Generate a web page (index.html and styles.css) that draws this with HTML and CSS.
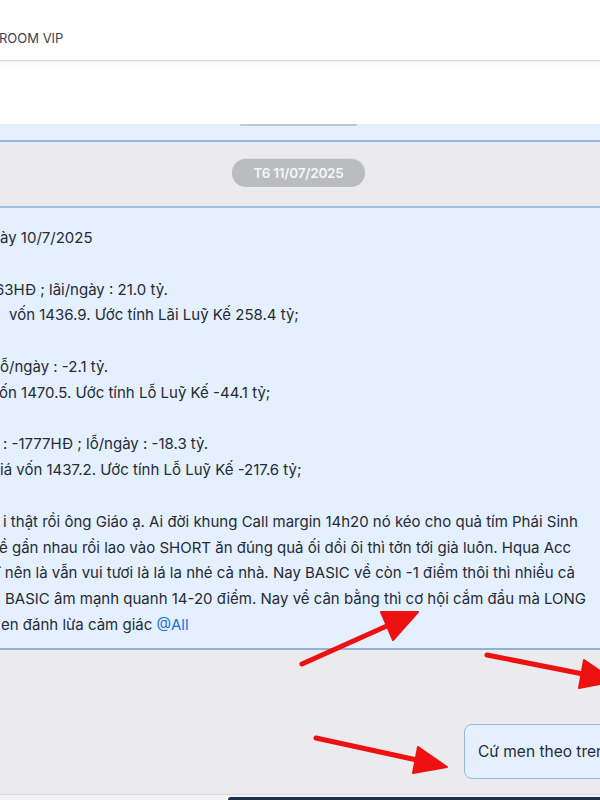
FILE: index.html
```html
<!DOCTYPE html>
<html lang="vi">
<head>
<meta charset="UTF-8">
<meta name="viewport" content="width=device-width, initial-scale=1.0">
<title>ROOM VIP</title>
<link rel="stylesheet" href="styles.css">
</head>
<body>
<div class="screen">
  <div class="header">
    <div class="title">ROOM VIP</div>
  </div>
  <div class="pinned"></div>

  <div class="chat">
    <div class="bubble prev"><span class="prev-shadow"></span></div>

    <div class="date-row">
      <span class="date-pill">T6 11/07/2025</span>
    </div>

    <div class="bubble main">
      <p class="ln">ày 10/7/2025</p>
      <p class="ln blank">&nbsp;</p>
      <p class="ln ind-n5">63HĐ ; lãi/ngày : 21.0 tỷ.</p>
      <p class="ln ind-9">vốn 1436.9. Ước tính Lãi Luỹ Kế 258.4 tỷ;</p>
      <p class="ln blank">&nbsp;</p>
      <p class="ln">ỗ/ngày : -2.1 tỷ.</p>
      <p class="ln ind-n1">ốn 1470.5. Ước tính Lỗ Luỹ Kế -44.1 tỷ;</p>
      <p class="ln blank">&nbsp;</p>
      <p class="ln ind-3">: -1777HĐ ; lỗ/ngày : -18.3 tỷ.</p>
      <p class="ln">iá vốn 1437.2. Ước tính Lỗ Luỹ Kế -217.6 tỷ;</p>
      <p class="ln blank">&nbsp;</p>
      <p class="ln ind-3">i thật rồi ông Giáo ạ. Ai đời khung Call margin 14h20 nó kéo cho quả tím Phái Sinh</p>
      <p class="ln ind-n1">ề gần nhau rồi lao vào SHORT ăn đúng quả ối dồi ôi thì tởn tới già luôn. Hqua Acc</p>
      <p class="ln ind-n3">ĩ nên là vẫn vui tươi là lá la nhé cả nhà. Nay BASIC về còn -1 điểm thôi thì nhiều cả</p>
      <p class="ln ind-5">BASIC âm mạnh quanh 14-20 điểm. Nay về cân bằng thì cơ hội cắm đầu mà LONG</p>
      <p class="ln ind-1">en đánh lừa cảm giác <span class="mention">@All</span></p>
    </div>

    <div class="mine-row">
      <div class="bubble mine">Cứ men theo trend mà đánh</div>
    </div>
  </div>

  <div class="footer">
    <div class="composer"></div>
  </div>

  <!-- red arrows drawn over the screenshot -->
  <svg class="arrows" width="600" height="800" viewBox="0 0 600 800">
    <g stroke="#ee1111" stroke-width="5" stroke-linecap="round" fill="#ee1111">
      <line x1="302" y1="664" x2="389" y2="625"/>
      <polygon points="418,612 393,640 381,612" stroke-width="2" stroke-linejoin="round"/>
      <line x1="487" y1="655" x2="583" y2="674"/>
      <polygon points="615,681 579,688 584,660" stroke-width="2" stroke-linejoin="round"/>
      <line x1="316" y1="738" x2="417" y2="760"/>
      <polygon points="447,767 413,773 418,747" stroke-width="2" stroke-linejoin="round"/>
    </g>
  </svg>
</div>
</body>
</html>
```

FILE: styles.css
```css
html, body { margin: 0; padding: 0; }
body { font-family: Inter, "Noto Sans", sans-serif; background: #ebebed; color: #262b35; }
.screen { position: relative; width: 600px; height: 800px; overflow: hidden; display: flex; flex-direction: column; }

.header { height: 60px; background: #fff; border-bottom: 1px solid #d3d4d7; box-shadow: 0 2px 4px rgba(0,0,0,0.06); display: flex; align-items: center; position: relative; z-index: 1; }
.title { font-size: 13px; color: #3e4350; margin-left: -1px; padding-top: 15px; }
.pinned { height: 63px; background: #fff; }

.chat { flex: 1; background: #ebebed; display: flex; flex-direction: column; }
.bubble { background: #e4f0fd; border: 1px solid #9fbde4; }
.bubble.prev { height: 16px; border-top: none; border-left: none; border-right: none; border-bottom: 2px solid #97b5e6; margin-right: -2px; position: relative; }
.prev-shadow { display: block; width: 117px; height: 2px; margin-left: 240px; background: #c3c8cf; border-radius: 1px; }

.date-row { height: 64px; display: flex; justify-content: center; align-items: center; }
.date-pill { background: #bbbcbe; color: #f6f6f7; font-size: 13.5px; font-weight: 600; letter-spacing: -0.2px; height: 28px; line-height: 28px; padding: 0 21px; border-radius: 14px; margin-left: -3px; margin-top: -2px; box-shadow: 0 -1px 1px rgba(0,0,0,0.05); }

.bubble.main { border-left: none; border-right: none; border-top: 2px solid #a3bfe2; border-bottom: 2px solid #94afd6; padding: 17px 0 10px 0; white-space: nowrap; overflow: hidden; }
.ln { margin: 0; font-size: 15px; line-height: 25.8px; }
.ind-n5 { text-indent: -5px; }
.ind-n3 { text-indent: -3px; }
.ind-n1 { text-indent: -1px; }
.ind-1 { text-indent: 1px; }
.ind-3 { text-indent: 3px; }
.ind-5 { text-indent: 5px; }
.ind-9 { text-indent: 9px; }
.mention { color: #1a6fe0; }

.mine-row { flex: 1; display: flex; align-items: flex-end; padding-bottom: 15px; }
.bubble.mine { margin-left: 464px; height: 53px; line-height: 53px; padding: 0 13px; border: 1.5px solid #98b7e3; border-radius: 8px; font-size: 15.5px; white-space: nowrap; }

.footer { height: 5px; background: #f3f3f4; border-top: 1px solid #dadbdd; display: flex; align-items: flex-end; }
.composer { margin-left: 228px; flex: 1; height: 3px; background: #1c2f4e; border-top-left-radius: 3px; }

.arrows { position: absolute; left: 0; top: 0; pointer-events: none; }
```
